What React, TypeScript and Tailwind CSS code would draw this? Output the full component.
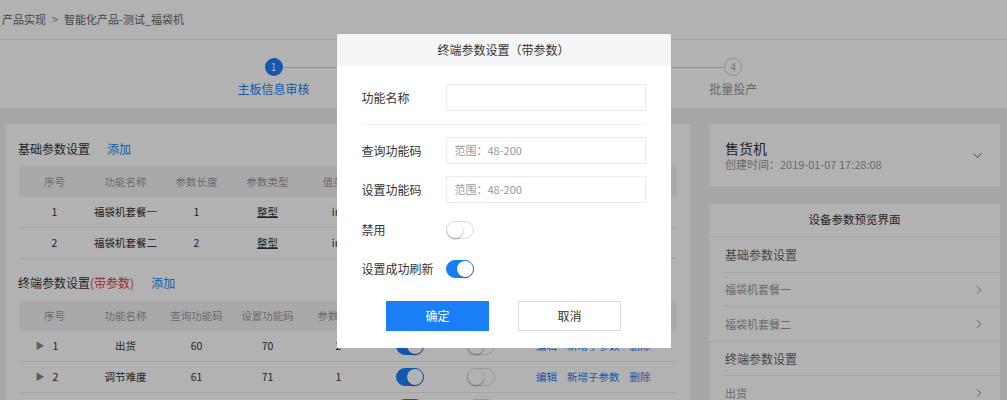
import { ChevronDown, ChevronRight } from 'lucide-react';

const BLUE = 'bg-[#1a7ff7]';

function Toggle({ on }: { on: boolean }) {
  return (
    <span
      className={`relative inline-block w-[28px] h-[18px] rounded-full border ${
        on ? 'bg-[#1a7ff7] border-[#1a7ff7]' : 'bg-white border-[#dcdcdc]'
      }`}
    >
      <span
        className={`absolute top-[0px] w-[16px] h-[16px] rounded-full bg-white shadow-[0_1px_2px_rgba(0,0,0,0.35)] ${
          on ? 'left-[10px]' : 'left-[0px]'
        }`}
      />
    </span>
  );
}

function Step({ n, label, active, first, last }: { n: number; label: string; active?: boolean; first?: boolean; last?: boolean }) {
  return (
    <div className="flex-1 flex flex-col items-center">
      <div className="w-full flex items-center h-[18px]">
        <div className={`flex-1 h-px ${first ? '' : 'bg-[#cfcfcf]'}`} />
        <div
          className={`w-[18px] h-[18px] rounded-full flex items-center justify-center text-[10px] leading-none ${
            active ? 'bg-[#1a7ff7] text-white' : 'border border-[#cfcfcf] text-[#aaa] bg-white'
          }`}
        >
          {n}
        </div>
        <div className={`flex-1 h-px ${last ? '' : 'bg-[#cfcfcf]'}`} />
      </div>
      <div className={`mt-[5px] text-[12px] leading-[16px] ${active ? 'text-[#1a7ff7]' : 'text-[#999]'}`}>{label}</div>
    </div>
  );
}

const basicRows = [
  { id: '1', name: '福袋机套餐一', len: '1', type: '整型', val: 'i' },
  { id: '2', name: '福袋机套餐二', len: '2', type: '整型', val: 'i' },
];

const termRows = [
  { id: '1', name: '出货', q: '60', s: '70', p: '2' },
  { id: '2', name: '调节难度', q: '61', s: '71', p: '1' },
  { id: '3', name: '', q: '', s: '', p: '' },
];

function Cell({ children, w = 'w-[71px]' }: { children?: React.ReactNode; w?: string }) {
  return <div className={`${w} shrink-0 flex items-center justify-center`}>{children}</div>;
}

export default function App() {
  return (
    <div className="relative w-[1007px] h-[400px] overflow-hidden bg-[#eff0f2] font-['Noto_Sans_CJK_SC','Noto_Sans',sans-serif] text-[#333]">
      {/* header */}
      <div className="bg-white">
        <div className="h-[40px] flex items-center pl-[2px] text-[11px] text-[#666] border-b border-[#e8e8e8] gap-[6px]">
          <span>产品实现</span>
          <span className="text-[#888]">&gt;</span>
          <span>智能化产品-测试_福袋机</span>
        </div>
        <div className="h-[68px] pt-[18px] flex justify-center">
          <div className="w-[613px] flex">
            <Step n={1} label="主板信息审核" active first />
            <Step n={2} label="功能参数设置" />
            <Step n={3} label="样机测试" />
            <Step n={4} label="批量投产" last />
          </div>
        </div>
      </div>

      {/* content */}
      <div className="flex pt-[16px] pl-[5px] gap-[19px]">
        <div className="w-[685px] h-[300px] bg-white pt-[17px] pl-[14px] pr-[13px]">
          <div className="h-[16px] flex items-center pl-[-1px] text-[12px]">
            <span className="-ml-[1px]">基础参数设置</span>
            <span className="ml-[17px] text-[#1a7ff7]">添加</span>
          </div>
          <div className="mt-[9px] text-[10.5px]">
            <div className="h-[31px] flex bg-[#f2f3f5] text-[#999]">
              <Cell>序号</Cell>
              <Cell>功能名称</Cell>
              <Cell>参数长度</Cell>
              <Cell>参数类型</Cell>
              <Cell>值类型</Cell>
              <Cell>默认值</Cell>
              <Cell>单位</Cell>
              <Cell w="flex-1">操作</Cell>
            </div>
            {basicRows.map((r) => (
              <div key={r.id} className="h-[31px] flex border-b border-[#ececec]">
                <Cell>{r.id}</Cell>
                <Cell>{r.name}</Cell>
                <Cell>{r.len}</Cell>
                <Cell>
                  <span className="underline">{r.type}</span>
                </Cell>
                <Cell>{r.val}nt</Cell>
                <Cell>0</Cell>
                <Cell>-</Cell>
                <Cell w="flex-1">
                  <span className="text-[#1a7ff7]">编辑</span>
                </Cell>
              </div>
            ))}
          </div>

          <div className="mt-[16px] h-[16px] flex items-center text-[12px]">
            <span className="-ml-[1px]">终端参数设置</span>
            <span className="text-[#e03a3a]">(带参数)</span>
            <span className="ml-[17px] text-[#1a7ff7]">添加</span>
          </div>
          <div className="mt-[10px] text-[10.5px]">
            <div className="h-[30px] flex bg-[#f2f3f5] text-[#999]">
              <Cell>序号</Cell>
              <Cell>功能名称</Cell>
              <Cell>查询功能码</Cell>
              <Cell>设置功能码</Cell>
              <Cell>参数有无</Cell>
              <Cell>显示</Cell>
              <Cell>禁用</Cell>
              <Cell w="flex-1">操作</Cell>
            </div>
            {termRows.map((r) => (
              <div key={r.id} className="h-[31px] flex border-b border-[#ececec]">
                <Cell>
                  <span className="flex items-center gap-[8px] -ml-[15px]">
                    <span className="text-[#888] text-[9px]">▶</span>
                    {r.id}
                  </span>
                </Cell>
                <Cell>{r.name}</Cell>
                <Cell>{r.q}</Cell>
                <Cell>{r.s}</Cell>
                <Cell>{r.p}</Cell>
                <Cell>
                  <Toggle on />
                </Cell>
                <Cell>
                  <Toggle on={false} />
                </Cell>
                <div className="flex-1 flex items-center pl-[20px] gap-[10px] text-[#1a7ff7]">
                  <span>编辑</span>
                  <span>新增子参数</span>
                  <span>删除</span>
                </div>
              </div>
            ))}
          </div>
        </div>

        <div className="w-[291px] flex flex-col gap-[18px]">
          <div className="h-[62px] bg-white pl-[16px] pr-[15px] flex items-center">
            <div className="flex-1">
              <div className="text-[14px] leading-[18px] text-[#333]">售货机</div>
              <div className="text-[11px] leading-[14px] text-[#999]">创建时间：2019-01-07 17:28:08</div>
            </div>
            <ChevronDown className="w-[15px] h-[15px] text-[#555]" strokeWidth={1.5} />
          </div>
          <div className="bg-white h-[200px]">
            <div className="h-[33px] flex items-center justify-center text-[11.5px] text-[#333] border-b border-[#ececec]">
              设备参数预览界面
            </div>
            <div className="pl-[16px]">
              <div className="h-[36px] flex items-center text-[12px] text-[#666] border-b border-[#ececec]">基础参数设置</div>
              <div className="h-[34px] flex items-center justify-between pr-[14px] text-[11px] text-[#999] border-b border-[#ececec]">
                福袋机套餐一
                <ChevronRight className="w-[14px] h-[14px] text-[#777]" strokeWidth={1.5} />
              </div>
              <div className="h-[34px] flex items-center justify-between pr-[14px] text-[11px] text-[#999]">
                福袋机套餐二
                <ChevronRight className="w-[14px] h-[14px] text-[#777]" strokeWidth={1.5} />
              </div>
            </div>
            <div className="border-t border-[#ececec] pl-[16px]">
              <div className="h-[34px] flex items-center text-[12px] text-[#666] border-b border-[#ececec]">终端参数设置</div>
              <div className="h-[34px] flex items-center justify-between pr-[14px] text-[11px] text-[#999]">
                出货
                <ChevronRight className="w-[14px] h-[14px] text-[#777]" strokeWidth={1.5} />
              </div>
            </div>
          </div>
        </div>
      </div>

      {/* modal */}
      <div className="absolute inset-0 bg-black/30 flex justify-center pt-[34px]">
        <div className="w-[334px] h-[314px] bg-white">
          <div className="h-[32px] bg-[#f4f5f7] flex items-center justify-center text-[12px] text-[#333]">
            终端参数设置（带参数）
          </div>
          <div className="px-[25px] text-[12px]">
            <div className="mt-[18px] flex items-center h-[27px]">
              <span className="w-[84px]">功能名称</span>
              <div className="w-[200px] h-[27px] border border-[#ececec]" />
            </div>
            <div className="mt-[13px] h-px bg-[#f0f0f0]" />
            <div className="mt-[12px] flex items-center h-[27px]">
              <span className="w-[84px]">查询功能码</span>
              <div className="w-[200px] h-[27px] border border-[#ececec] flex items-center pl-[8px] text-[11px] text-[#999]">
                范围：48-200
              </div>
            </div>
            <div className="mt-[12px] flex items-center h-[27px]">
              <span className="w-[84px]">设置功能码</span>
              <div className="w-[200px] h-[27px] border border-[#ececec] flex items-center pl-[8px] text-[11px] text-[#999]">
                范围：48-200
              </div>
            </div>
            <div className="mt-[18px] flex items-center h-[18px]">
              <span className="w-[84px]">禁用</span>
              <Toggle on={false} />
            </div>
            <div className="mt-[21px] flex items-center h-[18px]">
              <span className="w-[84px]">设置成功刷新</span>
              <Toggle on />
            </div>
            <div className="mt-[23px] flex justify-center gap-[29px]">
              <div className={`w-[103px] h-[30px] ${BLUE} text-white flex items-center justify-center`}>确定</div>
              <div className="w-[103px] h-[30px] border border-[#dcdcdc] flex items-center justify-center text-[#333]">取消</div>
            </div>
          </div>
        </div>
      </div>
    </div>
  );
}
